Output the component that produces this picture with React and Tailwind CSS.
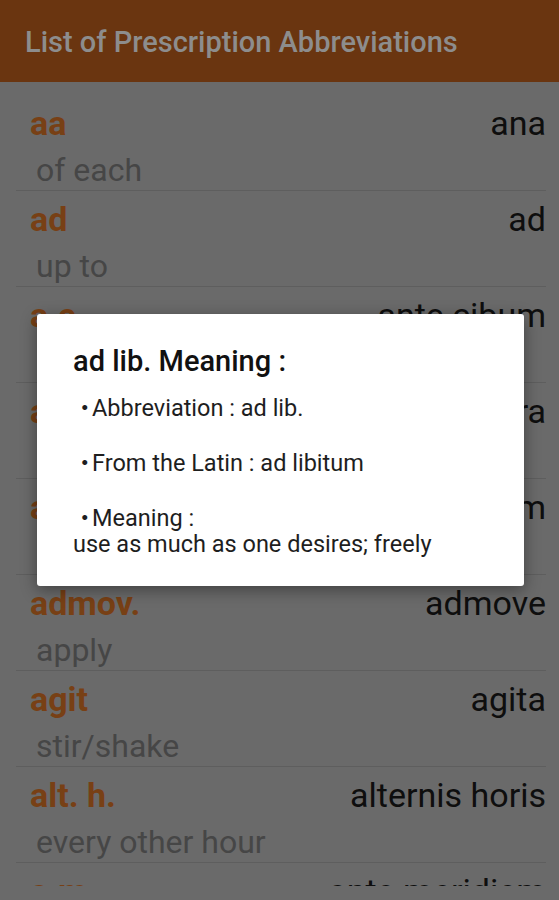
const ROWS = [
  { abbr: "aa", latin: "ana", meaning: "of each" },
  { abbr: "ad", latin: "ad", meaning: "up to" },
  { abbr: "a.c.", latin: "ante cibum", meaning: "before meals" },
  { abbr: "a.d.", latin: "auris dextra", meaning: "right ear" },
  { abbr: "ad lib.", latin: "ad libitum", meaning: "as much as desired" },
  { abbr: "admov.", latin: "admove", meaning: "apply" },
  { abbr: "agit", latin: "agita", meaning: "stir/shake" },
  { abbr: "alt. h.", latin: "alternis horis", meaning: "every other hour" },
  { abbr: "a.m.", latin: "ante meridiem", meaning: "morning" },
];

const Row = ({ row }) => (
  <div className="h-[96px] ml-[16px] mr-[13px] pt-[4px] border-b border-[#5e5e5e]">
    <div className="flex items-center justify-between h-[48px] pl-[14px]">
      <span className="text-[34px] font-bold text-[#784015]">{row.abbr}</span>
      <span className="text-[34px] text-[#0e0e0e]">{row.latin}</span>
    </div>
    <div className="h-[40px] mt-[3px] pl-[20px] leading-[40px] text-[32px] text-[#464646]">
      {row.meaning}
    </div>
  </div>
);

export default function App() {
  return (
    <div
      className="relative w-[559px] h-[900px] overflow-hidden bg-[#6a6a6a]"
      style={{ fontFamily: "Roboto, 'Noto Sans CJK JP', sans-serif" }}
    >
      <header className="h-[82px] bg-[#6a3510] flex items-center pl-[25px] pt-[3px]">
        <h1 className="text-[29px] font-medium text-[#8d8d8d]">
          List of Prescription Abbreviations
        </h1>
      </header>

      <div className="h-[804px] overflow-hidden pt-[13px]">
        {ROWS.map((row) => (
          <Row key={row.abbr} row={row} />
        ))}
      </div>

      {/* dialog */}
      <div className="absolute left-[37px] top-[314px] w-[487px] h-[272px] bg-white rounded-[3px] shadow-[0_4px_16px_rgba(0,0,0,0.4)] pl-[36px] pr-[16px] pt-[31px]">
        <h2 className="text-[29px] leading-[32px] font-medium text-[#111]">
          ad lib. Meaning :
        </h2>
        <div className="mt-[18px] text-[23.5px] leading-[27px] text-[#1e1e1e]">
          <p>
            <span className="inline-block w-[19px] text-center">・</span>Abbreviation : ad lib.
          </p>
          <p className="mt-[28px]">
            <span className="inline-block w-[19px] text-center">・</span>From the Latin : ad libitum
          </p>
          <p className="mt-[28px]">
            <span className="inline-block w-[19px] text-center">・</span>Meaning :
          </p>
          <p className="-mt-[1px]">use as much as one desires; freely</p>
        </div>
      </div>
    </div>
  );
}
